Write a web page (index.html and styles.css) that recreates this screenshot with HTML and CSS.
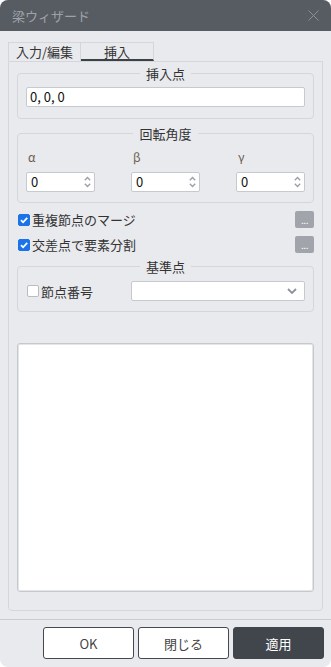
FILE: index.html
```html
<!DOCTYPE html>
<html lang="ja">
<head>
<meta charset="utf-8">
<link rel="stylesheet" href="styles.css">
</head>
<body>
<div class="window">
  <div class="titlebar">
    <span class="title">梁ウィザード</span>
    <svg class="close" width="11" height="11" viewBox="0 0 11 11"><path d="M0.5 0.5 L10.5 10.5 M10.5 0.5 L0.5 10.5" stroke="#8b9097" stroke-width="1" fill="none"/></svg>
  </div>
  <div class="main">
    <div class="tabs">
      <div class="tab">入力/編集</div>
      <div class="tab active">挿入</div>
    </div>
    <div class="panel">
      <fieldset class="group g1">
        <legend>挿入点</legend>
        <div class="textbox">0, 0, 0</div>
      </fieldset>
      <fieldset class="group g2">
        <legend>回転角度</legend>
        <div class="cols">
          <div class="lbl">α</div>
          <div class="lbl">β</div>
          <div class="lbl">γ</div>
          <div class="spin"><span>0</span><svg class="arrows" width="7" height="12" viewBox="0 0 7 12"><path d="M0.8 4.2 L3.5 1.5 L6.2 4.2 M0.8 7.8 L3.5 10.5 L6.2 7.8" stroke="#9a9ea4" stroke-width="1.3" fill="none"/></svg></div>
          <div class="spin"><span>0</span><svg class="arrows" width="7" height="12" viewBox="0 0 7 12"><path d="M0.8 4.2 L3.5 1.5 L6.2 4.2 M0.8 7.8 L3.5 10.5 L6.2 7.8" stroke="#9a9ea4" stroke-width="1.3" fill="none"/></svg></div>
          <div class="spin"><span>0</span><svg class="arrows" width="7" height="12" viewBox="0 0 7 12"><path d="M0.8 4.2 L3.5 1.5 L6.2 4.2 M0.8 7.8 L3.5 10.5 L6.2 7.8" stroke="#9a9ea4" stroke-width="1.3" fill="none"/></svg></div>
        </div>
      </fieldset>
      <div class="checkrow first">
        <span class="cb checked"><svg width="12" height="12" viewBox="0 0 12 12"><path d="M3 6.2 L5.1 8.3 L9.2 3.9" stroke="#fff" stroke-width="1.8" fill="none"/></svg></span>
        <span class="cblabel">重複節点のマージ</span>
        <span class="dots">...</span>
      </div>
      <div class="checkrow">
        <span class="cb checked"><svg width="12" height="12" viewBox="0 0 12 12"><path d="M3 6.2 L5.1 8.3 L9.2 3.9" stroke="#fff" stroke-width="1.8" fill="none"/></svg></span>
        <span class="cblabel">交差点で要素分割</span>
        <span class="dots">...</span>
      </div>
      <fieldset class="group g3">
        <legend>基準点</legend>
        <div class="cols">
          <div class="nodecheck"><span class="cb"></span><span class="cblabel">節点番号</span></div>
          <div class="combo"><svg width="10" height="6" viewBox="0 0 10 6"><path d="M1 1 L5 5 L9 1" stroke="#8e9298" stroke-width="1.8" fill="none"/></svg></div>
        </div>
      </fieldset>
      <div class="listbox"></div>
    </div>
  </div>
  <div class="footer">
    <button class="btn">OK</button>
    <button class="btn">閉じる</button>
    <button class="btn primary">適用</button>
  </div>
</div>
</body>
</html>
```
FILE: styles.css
```css
* { box-sizing: border-box; }
html, body { margin: 0; padding: 0; background: #ffffff; }
body {
  font-family: "Noto Sans CJK JP", "Noto Sans", sans-serif;
  font-size: 13px;
  color: #333;
}
.window {
  width: 331px;
  height: 667px;
  background: #e9eaee;
  border-radius: 8px;
  overflow: hidden;
  display: flex;
  flex-direction: column;
}
.titlebar {
  height: 31px;
  background: #575c63;
  display: flex;
  align-items: center;
  justify-content: space-between;
  padding: 0 12px 0 12px;
}
.title {
  color: #9ea2a8;
  font-size: 13px;
  line-height: 17px;
}
.close { display: block; }
.main {
  padding: 11px 8px 0 8px;
}
.tabs {
  display: flex;
  height: 19px;
}
.tab {
  width: 73px;
  height: 19px;
  border: 1px solid #d4d6da;
  border-bottom: none;
  text-align: center;
  font-size: 13px;
  line-height: 18px;
  color: #333;
}
.tab + .tab { border-left: none; }
.tab.active {
  border-bottom: 2px solid #3c4047;
  line-height: 17px;
}
.panel {
  border: 1px solid #d4d6da;
  border-radius: 0 0 4px 4px;
  padding: 3px 8px 18px 8px;
}
.group {
  margin: 0;
  border: 1px solid #d4d6da;
  border-radius: 4px;
  min-inline-size: 0;
}
.group legend {
  margin-inline: auto;
  padding: 0 6px;
  font-size: 13px;
  line-height: 17px;
  color: #333;
}
.g1 { padding: 5px 8px 11px 8px; }
.g2 { margin-top: 6px; padding: 6px 8px 10px 8px; }
.g3 { margin-top: 5px; padding: 6px 8px 10px 8px; }
.textbox {
  height: 20px;
  background: #fff;
  border: 1px solid #c6c9ce;
  border-radius: 2px;
  padding-left: 3px;
  font-size: 13px;
  line-height: 18px;
  color: #111;
}
.cols {
  display: grid;
  grid-template-columns: 69px 69px 69px;
  column-gap: 36px;
}
.lbl {
  font-size: 12px;
  line-height: 17px;
  color: #6b5d4f;
  padding-left: 2px;
  margin-bottom: 7px;
}
.spin {
  height: 20px;
  background: #fff;
  border: 1px solid #c6c9ce;
  border-radius: 2px;
  display: flex;
  align-items: center;
  justify-content: space-between;
  padding: 0 3px 0 4px;
  color: #111;
  font-size: 13px;
  line-height: 18px;
}
.arrows { display: block; }
.checkrow {
  height: 17px;
  display: flex;
  align-items: center;
  margin-top: 8px;
}
.checkrow.first { margin-top: 8px; }
.cb {
  width: 12px;
  height: 12px;
  border-radius: 2px;
  border: 1px solid #b9bcc1;
  background: #fff;
  margin-left: 1px;
  display: inline-flex;
  flex: none;
}
.cb.checked {
  background: #1a73e8;
  border-color: #1a73e8;
}
.cb.checked svg { margin: -1px; }
.cblabel {
  margin-left: 2px;
  font-size: 13px;
  line-height: 17px;
  color: #333;
}
.dots {
  margin-left: auto;
  width: 19px;
  height: 17px;
  background: #a1a5ab;
  border-radius: 2px;
  color: #fff;
  font-size: 10px;
  line-height: 17px;
  text-align: center;
  letter-spacing: -0.5px;
}
.nodecheck {
  display: flex;
  align-items: center;
  height: 20px;
}
.combo {
  grid-column: 2 / 4;
  height: 20px;
  background: #fff;
  border: 1px solid #c6c9ce;
  border-radius: 2px;
  display: flex;
  align-items: center;
  justify-content: flex-end;
  padding-right: 7px;
}
.combo svg { display: block; }
.listbox {
  margin-top: 31px;
  height: 249px;
  background: #fff;
  border: 1px solid #c5c8cd;
  box-shadow: inset 0 0 0 1px #e3e5e8;
  border-radius: 3px;
}
.footer {
  margin-top: 8px;
  border-top: 1px solid #c9ccd1;
  padding: 7px 7px 8px 0;
  display: flex;
  justify-content: flex-end;
  gap: 4px;
}
.btn {
  width: 91px;
  height: 32px;
  background: #fff;
  border: 1px solid #45494f;
  border-radius: 3px;
  font-family: "Noto Sans CJK JP", "Noto Sans", sans-serif;
  font-size: 13px;
  color: #444;
  padding: 0;
}
.btn.primary {
  background: #41464d;
  border-color: #41464d;
  color: #fff;
}
```
